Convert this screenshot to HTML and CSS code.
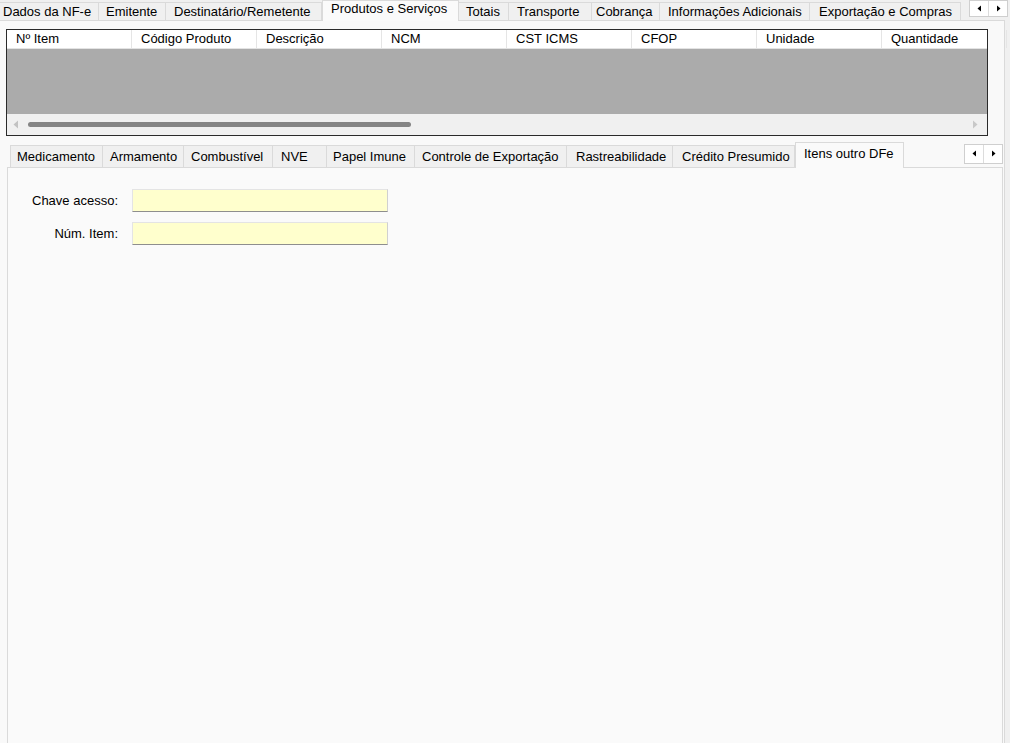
FILE: index.html
```html
<!DOCTYPE html>
<html lang="pt-BR">
<head>
<meta charset="utf-8">
<title>NF-e - Produtos e Serviços</title>
<link rel="stylesheet" href="styles.css">
</head>
<body>
<div class="window">
  <div class="strip strip-top">
    <div class="tabs tabs-top">
      <div class="tab">Dados da NF-e</div>
      <div class="tab">Emitente</div>
      <div class="tab">Destinatário/Remetente</div>
      <div class="tab tab-active">Produtos e Serviços</div>
      <div class="tab">Totais</div>
      <div class="tab">Transporte</div>
      <div class="tab">Cobrança</div>
      <div class="tab">Informações Adicionais</div>
      <div class="tab">Exportação e Compras</div>
    </div>
    <div class="scroller scroller-top">
      <span class="sbtn"><svg width="5" height="7" viewBox="0 0 5 7"><path d="M4 0.5 L0.5 3.5 L4 6.5 Z" fill="#000"/></svg></span>
      <span class="sbtn"><svg width="5" height="7" viewBox="0 0 5 7"><path d="M1 0.5 L4.5 3.5 L1 6.5 Z" fill="#000"/></svg></span>
    </div>
  </div>

  <div class="page page-outer">
    <div class="grid">
      <div class="grid-head">
        <div class="col">Nº Item</div>
        <div class="col">Código Produto</div>
        <div class="col">Descrição</div>
        <div class="col">NCM</div>
        <div class="col">CST ICMS</div>
        <div class="col">CFOP</div>
        <div class="col">Unidade</div>
        <div class="col">Quantidade</div>
      </div>
      <div class="grid-body"></div>
      <div class="hscroll">
        <svg class="arrow" width="6" height="9" viewBox="0 0 6 9"><path d="M5 0.5 L0.5 4.5 L5 8.5 Z" fill="#c2c2c2"/></svg>
        <div class="thumb-track"><div class="thumb"></div></div>
        <svg class="arrow" width="6" height="9" viewBox="0 0 6 9"><path d="M1 0.5 L5.5 4.5 L1 8.5 Z" fill="#c8c8c8"/></svg>
      </div>
    </div>

    <div class="strip strip-inner">
      <div class="tabs tabs-inner">
        <div class="tab">Medicamento</div>
        <div class="tab">Armamento</div>
        <div class="tab">Combustível</div>
        <div class="tab">NVE</div>
        <div class="tab">Papel Imune</div>
        <div class="tab">Controle de Exportação</div>
        <div class="tab">Rastreabilidade</div>
        <div class="tab">Crédito Presumido</div>
        <div class="tab tab-active">Itens outro DFe</div>
      </div>
      <div class="scroller scroller-inner">
        <span class="sbtn"><svg width="5" height="7" viewBox="0 0 5 7"><path d="M4 0.5 L0.5 3.5 L4 6.5 Z" fill="#000"/></svg></span>
        <span class="sbtn"><svg width="5" height="7" viewBox="0 0 5 7"><path d="M1 0.5 L4.5 3.5 L1 6.5 Z" fill="#000"/></svg></span>
      </div>
    </div>

    <div class="page page-inner">
      <div class="form">
        <label class="lbl">Chave acesso:</label>
        <div class="input"></div>
        <label class="lbl">Núm. Item:</label>
        <div class="input"></div>
      </div>
    </div>
  </div>
</div>
</body>
</html>
```

FILE: styles.css
```css
* { box-sizing: border-box; }

html, body {
  margin: 0;
  height: 100%;
}

body {
  background: #f0f0f0;
  font-family: "Liberation Sans", Arial, sans-serif;
  font-size: 13px;
  color: #000;
  overflow: hidden;
}

.window {
  display: flex;
  flex-direction: column;
  height: 743px;
  width: 1010px;
}

/* ---------- tab strips ---------- */
.strip {
  display: flex;
  align-items: flex-start;
  position: relative;
}

.strip-top {
  height: 20px;
}

.tabs {
  display: grid;
  align-items: end;
  height: 100%;
}

.tabs-top {
  grid-template-columns: 99px 67px 156px 137px 50px 83px 68px 150px 151px;
}

.tab {
  height: 18px;
  background: #f0f0f0;
  border: 1px solid #dadada;
  border-bottom: none;
  border-left: none;
  padding-left: 3px;
  line-height: 17px;
  white-space: nowrap;
  overflow: hidden;
}

.tabs-top .tab:nth-child(2) { padding-left: 7px; }
.tabs-top .tab:nth-child(3) { padding-left: 8px; }
.tabs-top .tab:nth-child(5) { padding-left: 7px; }
.tabs-top .tab:nth-child(6) { padding-left: 8px; }
.tabs-top .tab:nth-child(7) { padding-left: 4px; }
.tabs-top .tab:nth-child(8) { padding-left: 8px; }
.tabs-top .tab:nth-child(9) { padding-left: 9px; }

.tabs-top .tab-active {
  height: 21px;
  background: #fafafa;
  border: 1px solid #dadada;
  border-bottom: none;
  padding-left: 8px;
  line-height: 15px;
  position: relative;
  z-index: 2;
  margin-bottom: -1px;
}

.scroller {
  display: flex;
  background: #fff;
  border: 1px solid #cfcfcf;
  height: 17px;
}

.scroller-top {
  margin-left: 8px;
  width: 39px;
}

.sbtn {
  flex: 1;
  display: flex;
  align-items: center;
  justify-content: center;
}

.sbtn + .sbtn {
  border-left: 1px solid #dcdcdc;
}

/* ---------- outer page ---------- */
.page-outer {
  flex: 1;
  width: 1005px;
  background: #f9f9f9;
  border-top: 1px solid #dadada;
  border-right: 1px solid #dadada;
  padding: 8px 0 0 6px;
  display: flex;
  flex-direction: column;
}

/* ---------- grid ---------- */
.grid {
  width: 982px;
  height: 107px;
  border: 1px solid #2a2a2a;
  display: flex;
  flex-direction: column;
  background: #ababab;
}

.grid-head {
  height: 19px;
  background: #fff;
  display: grid;
  grid-template-columns: 125px repeat(7, 125px);
  border-bottom: 1px solid #e3e3e3;
}

.col {
  padding-left: 9px;
  line-height: 18px;
  border-right: 1px solid #e5e5e5;
  white-space: nowrap;
  overflow: hidden;
}

.col:first-child { padding-left: 9px; }

.grid-body {
  flex: 1;
  background: #ababab;
}

.hscroll {
  height: 21px;
  background: #f0f0f0;
  display: flex;
  align-items: center;
  padding: 0 9px 0 6px;
  gap: 0;
}

.thumb-track {
  flex: 1;
  padding: 0 8px 0 9px;
}

.thumb {
  width: 383px;
  height: 5px;
  border-radius: 3px;
  background: #858585;
}

/* ---------- inner strip ---------- */
.strip-inner {
  height: 25px;
  margin-top: 6px;
  padding-left: 4px;
  align-items: flex-end;
}

.tabs-inner {
  grid-template-columns: 93px 81px 89px 54px 88px 152px 106px 122px 109px;
}

.tabs-inner .tab {
  height: 22px;
  line-height: 21px;
  padding-left: 6px;
}

.tabs-inner .tab:first-child { border-left: 1px solid #dadada; }
.tabs-inner .tab:nth-child(2) { padding-left: 7px; }
.tabs-inner .tab:nth-child(3) { padding-left: 7px; }
.tabs-inner .tab:nth-child(4) { padding-left: 8px; }
.tabs-inner .tab:nth-child(5) { padding-left: 6px; }
.tabs-inner .tab:nth-child(6) { padding-left: 7px; }
.tabs-inner .tab:nth-child(7) { padding-left: 9px; }
.tabs-inner .tab:nth-child(8) { padding-left: 9px; }

.tabs-inner .tab-active {
  height: 26px;
  background: #fafafa;
  border: 1px solid #dadada;
  border-bottom: none;
  padding-left: 8px;
  line-height: 22px;
  position: relative;
  z-index: 2;
  margin-bottom: -1px;
}

.scroller-inner {
  margin-left: 60px;
  width: 39px;
  height: 20px;
  align-self: center;
  margin-bottom: 2px;
}

/* ---------- inner page ---------- */
.page-inner {
  flex: 1;
  width: 996px;
  margin-left: 1px;
  background: #fafafa;
  border: 1px solid #dadada;
  border-bottom: none;
  padding: 21px 0 0 0;
}

.form {
  display: grid;
  grid-template-columns: 110px 256px;
  column-gap: 14px;
  row-gap: 10px;
  align-items: center;
}

.lbl {
  text-align: right;
  white-space: nowrap;
}

.input {
  height: 23px;
  background: #ffffcd;
  border: 1px solid #e4e4e4;
  border-bottom: 1px solid #8e8e8e;
  border-right-color: #d0d0d0;
}
```
